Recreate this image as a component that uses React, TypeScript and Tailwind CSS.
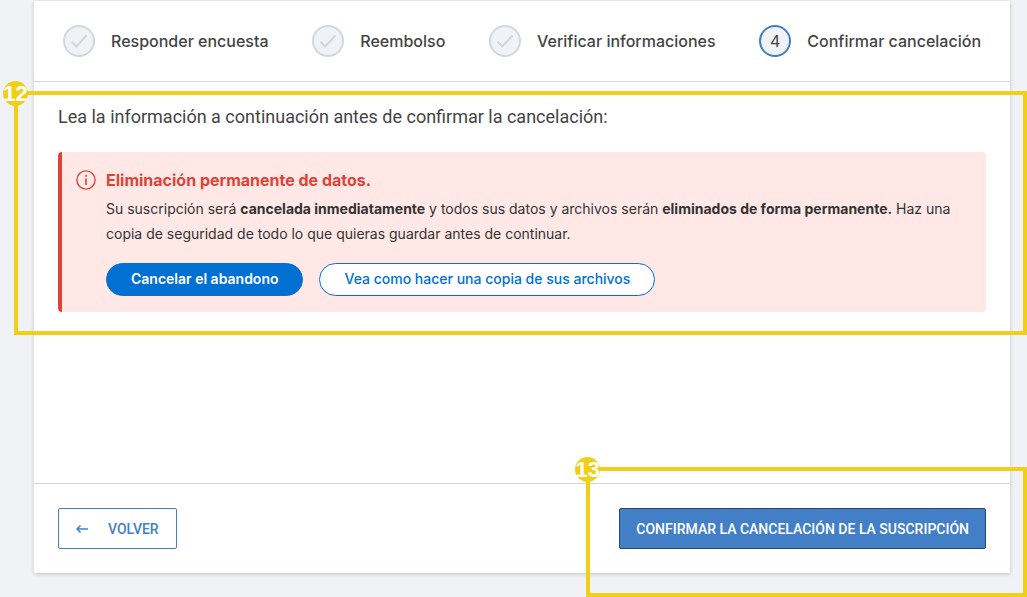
import type { ReactNode } from "react";
import clsx from "clsx";

const steps = [
  { label: "Responder encuesta", done: true },
  { label: "Reembolso", done: true },
  { label: "Verificar informaciones", done: true },
  { label: "Confirmar cancelación", done: false },
];

function CheckIcon() {
  return (
    <svg width="32" height="32" viewBox="0 0 32 32" fill="none" aria-hidden="true" className="shrink-0">
      <path d="M8.7 16.8 13.2 21.4 23.5 10.6" stroke="#cfd8dc" strokeWidth="2.2" />
    </svg>
  );
}

function InfoIcon() {
  return (
    <svg width="20" height="20" viewBox="0 0 20 20" fill="none" aria-hidden="true" className="shrink-0">
      <circle cx="10" cy="10" r="9.1" stroke="#dc4437" strokeWidth="1.4" />
      <path d="M10 8.5V15" stroke="#dc4437" strokeWidth="1.6" />
      <path d="M10 5V6.8" stroke="#dc4437" strokeWidth="1.6" />
    </svg>
  );
}

function BackIcon() {
  return (
    <svg width="12" height="10" viewBox="0 0 12 10" fill="none" aria-hidden="true">
      <path d="M12 5H1M4.5 1.4 1 5 4.5 8.6" stroke="#437fc7" strokeWidth="1.5" />
    </svg>
  );
}

// Yellow outline with a numbered dot on its top left corner
function Callout({ number, className }: { number: number; className: string }) {
  return (
    <div className={clsx("pointer-events-none absolute border-4 border-[#efcf17]", className)}>
      <span className="absolute -top-3.5 -left-[15px] flex size-[25px] items-center justify-center rounded-full bg-[#efcf17] font-['Liberation_Sans',sans-serif] text-[22px] leading-none font-bold text-white">
        {number}
      </span>
    </div>
  );
}

function PillButton({ children, primary }: { children: ReactNode; primary?: boolean }) {
  return (
    <button
      type="button"
      className={clsx(
        "h-[33px] rounded-full border border-[#0070d2] px-6 pb-0.5 text-sm",
        primary ? "bg-[#0070d2] font-semibold text-white" : "bg-white font-medium text-[#0070d2]"
      )}
    >
      {children}
    </button>
  );
}

export default function App() {
  return (
    <div className="min-h-screen overflow-hidden bg-[#f1f2f6] pt-px pr-[17px] pb-6 pl-[34px] font-['Inter',sans-serif] text-[#444]">
      <main className="flex min-h-[572px] flex-col bg-white shadow-[0_1px_4px_rgba(0,0,0,0.2)]">
        <ol className="flex h-[81px] items-center justify-between border-b border-[#cfd8dc] px-[29px]">
          {steps.map((step, i) => (
            <li key={step.label} className="flex items-center gap-4 whitespace-nowrap">
              <span
                className={clsx(
                  "flex size-8 items-center justify-center rounded-full border-2 bg-[#f1f2f6]",
                  step.done ? "border-[#cfd8dc]" : "border-[#437fc7]"
                )}
              >
                {step.done ? <CheckIcon /> : i + 1}
              </span>
              <span className="text-base font-medium">{step.label}</span>
            </li>
          ))}
        </ol>

        <section className="relative px-6 py-[23px]">
          <h1 className="font-['Roboto',sans-serif] text-lg leading-6">
            Lea la información a continuación antes de confirmar la cancelación:
          </h1>

          <div className="mt-[23px] flex gap-2.5 rounded-[4px] border-l-4 border-[#dc4437] bg-[#ffe8e6] pt-[18px] pr-6 pb-4 pl-3.5">
            <InfoIcon />
            <div>
              <h2 className="text-base leading-5 font-bold text-[#dc4437]">
                Eliminación permanente de datos.
              </h2>
              <p className="mt-1.5 text-sm leading-[25px] text-[#333]">
                Su suscripción será <strong>cancelada inmediatamente</strong> y todos sus datos y archivos serán{" "}
                <strong>eliminados de forma permanente.</strong> Haz una copia de seguridad de todo lo que quieras
                guardar antes de continuar.
              </p>
              <div className="mt-[17px] flex gap-4">
                <PillButton primary>Cancelar el abandono</PillButton>
                <PillButton>Vea como hacer una copia de sus archivos</PillButton>
              </div>
            </div>
          </div>
          <Callout number={12} className="top-[9px] -right-[17px] bottom-0 -left-5" />
        </section>

        <footer className="mt-auto flex items-center justify-between border-t border-[#cfd8dc] p-6 font-['Roboto',sans-serif] text-sm font-medium">
          <button
            type="button"
            className="flex h-[41px] items-center gap-5 rounded-xs border border-[#437fc7] px-[17px] text-[#437fc7]"
          >
            <BackIcon />
            VOLVER
          </button>
          <div className="relative">
            <button
              type="button"
              className="h-[41px] rounded-xs border border-[#26476f] bg-[#437fc7] px-4 text-white"
            >
              CONFIRMAR LA CANCELACIÓN DE LA SUSCRIPCIÓN
            </button>
            <Callout number={13} className="-top-[41px] -right-[41px] -bottom-12 -left-[33px]" />
          </div>
        </footer>
      </main>
    </div>
  );
}
